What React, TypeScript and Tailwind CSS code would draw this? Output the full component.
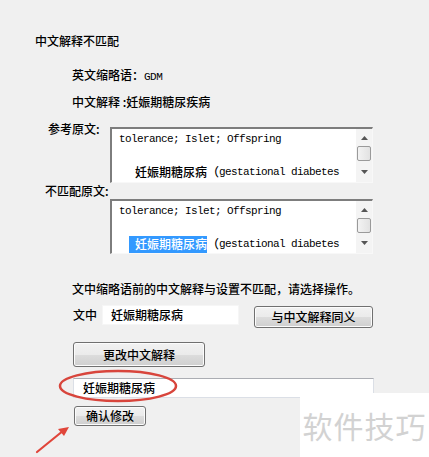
import React from "react";

const CJK = "font-['Noto_Sans_CJK_SC','Noto_Sans',sans-serif]";
const MONO = "font-['Liberation_Mono','Noto_Sans_CJK_SC',monospace]";

const btn =
  "flex items-center justify-center rounded-[3px] border border-[#707070] bg-[linear-gradient(to_bottom,#f2f2f2_0%,#ebebeb_50%,#dddddd_50%,#cfcfcf_100%)] text-[12px] text-black leading-none shadow-[inset_0_0_0_1px_#fcfcfc]";

function ScrollBar() {
  return (
    <div className="flex h-full w-[16px] flex-col items-center bg-[#f4f4f4]">
      <div className="flex h-[17px] w-full items-center justify-center">
        <svg width="7" height="4" viewBox="0 0 7 4">
          <path d="M3.5 0 L7 4 L0 4 Z" fill="#555555" />
        </svg>
      </div>
      <div className="h-[15px] w-[14px] rounded-[2px] border border-[#9a9a9a] bg-[linear-gradient(to_right,#f3f3f3,#e2e2e2)]" />
      <div className="flex flex-1 items-center justify-center">
        <svg width="7" height="4" viewBox="0 0 7 4">
          <path d="M0 0 L7 0 L3.5 4 Z" fill="#555555" />
        </svg>
      </div>
    </div>
  );
}

function TextBox({ highlight, h }: { highlight?: boolean; h: string }) {
  return (
    <div
      className={`flex ${h} w-[263px] border-t-2 border-l-2 border-b border-r border-t-[#7d7d7d] border-l-[#7d7d7d] border-b-[#f8f8f8] border-r-[#f8f8f8] bg-white`}
    >
      <div className="flex-1 overflow-hidden pl-[7px] pt-[2px]">
        <div className={`${MONO} text-[11px] leading-[16.5px] tracking-[-0.6px] text-black whitespace-pre`}>
          tolerance; Islet; Offspring
        </div>
        <div className="h-[16.5px]" />
        <div className={`${MONO} flex items-center text-[11px] leading-[16.5px] tracking-[-0.6px] text-black whitespace-pre`}>
          <span
            className={`${CJK} font-medium text-[12px] tracking-normal ${
              highlight ? "ml-[10px] bg-[#3399ff] pl-[6px] text-white" : "ml-[16px]"
            }`}
          >
            妊娠期糖尿病
          </span>
          <span className={`${CJK} text-[12px] tracking-normal`}>（</span>
          <span>gestational diabetes</span>
        </div>
        <div className={`${MONO} pl-[78px] text-[11px] leading-[14px] tracking-[-0.6px] text-black whitespace-pre`}>
          mellitus,<span className={`${CJK} text-[12px] tracking-normal`}>GDM）是指妊娠期间</span>
        </div>
      </div>
      <ScrollBar />
    </div>
  );
}

export default function App() {
  return (
    <div className={`relative h-[457px] w-[429px] overflow-hidden bg-[#f0f0f0] ${CJK} font-medium text-[12px] text-black`}>
      <div className="flex flex-col">
        <div className="pl-[35px] pt-[33px] leading-[16px]">中文解释不匹配</div>
        <div className="mt-[18px] pl-[72px] leading-[16px]">
          英文缩略语：<span className={`${MONO} font-normal text-[11px] tracking-[-0.5px]`}>GDM</span>
        </div>
        <div className="mt-[9px] pl-[72px] leading-[16px]">中文解释 :妊娠期糖尿疾病</div>

        <div className="mt-[11px] flex items-start">
          <div className="w-[110px] pl-[48px] leading-[16px]">参考原文:</div>
          <div className="mt-[6px]">
            <TextBox h="h-[56px]" />
          </div>
        </div>
        <div className="pl-[45px] leading-[16px]">不匹配原文:</div>
        <div className="pl-[110px]">
          <TextBox h="h-[55px]" highlight />
        </div>

        <div className="mt-[27px] pl-[72px] leading-[16px]">
          文中缩略语前的中文解释与设置不匹配，请选择操作。
        </div>

        <div className="mt-[8px] flex items-start pl-[73px]">
          <div className="flex h-[20px] w-[29px] items-center">文中</div>
          <div className="flex h-[20px] w-[137px] items-center border border-[#f6f6f6] bg-white pl-[8px]">
            妊娠期糖尿病
          </div>
          <div className={`${btn} ml-[15px] mt-[1px] h-[22px] w-[119px]`}>与中文解释同义</div>
        </div>

        <div className={`${btn} ml-[73px] mt-[14px] h-[25px] w-[132px]`}>更改中文解释</div>

        <div className="ml-[73px] mt-[11px] flex h-[20px] w-[301px] items-center border border-[#dbdfe6] border-t-[#abadb3] bg-white pl-[9px]">
          妊娠期糖尿病
        </div>

        <div className={`${btn} ml-[74px] mt-[8px] h-[20px] w-[72px]`}>确认修改</div>
      </div>

      {/* red ellipse annotation */}
      <svg className="absolute left-0 top-0" width="429" height="457" viewBox="0 0 429 457">
        <ellipse cx="118" cy="386" rx="58" ry="15" fill="none" stroke="#d8453c" strokeWidth="2.5" />
        <path d="M37 452 L61 432.5" stroke="#e0453a" strokeWidth="2.2" strokeLinecap="round" />
        <path d="M69 427 L58 429 L64 436 Z" fill="#e0453a" />
      </svg>

      {/* watermark */}
      <div className="absolute bottom-0 right-0 flex h-[64px] w-[129px] items-center justify-center bg-white">
        <span className="font-['Noto_Sans_CJK_SC',sans-serif] font-normal text-[30px] leading-none tracking-[1px] text-[#d2d2d2]">
          软件技巧
        </span>
      </div>
    </div>
  );
}
